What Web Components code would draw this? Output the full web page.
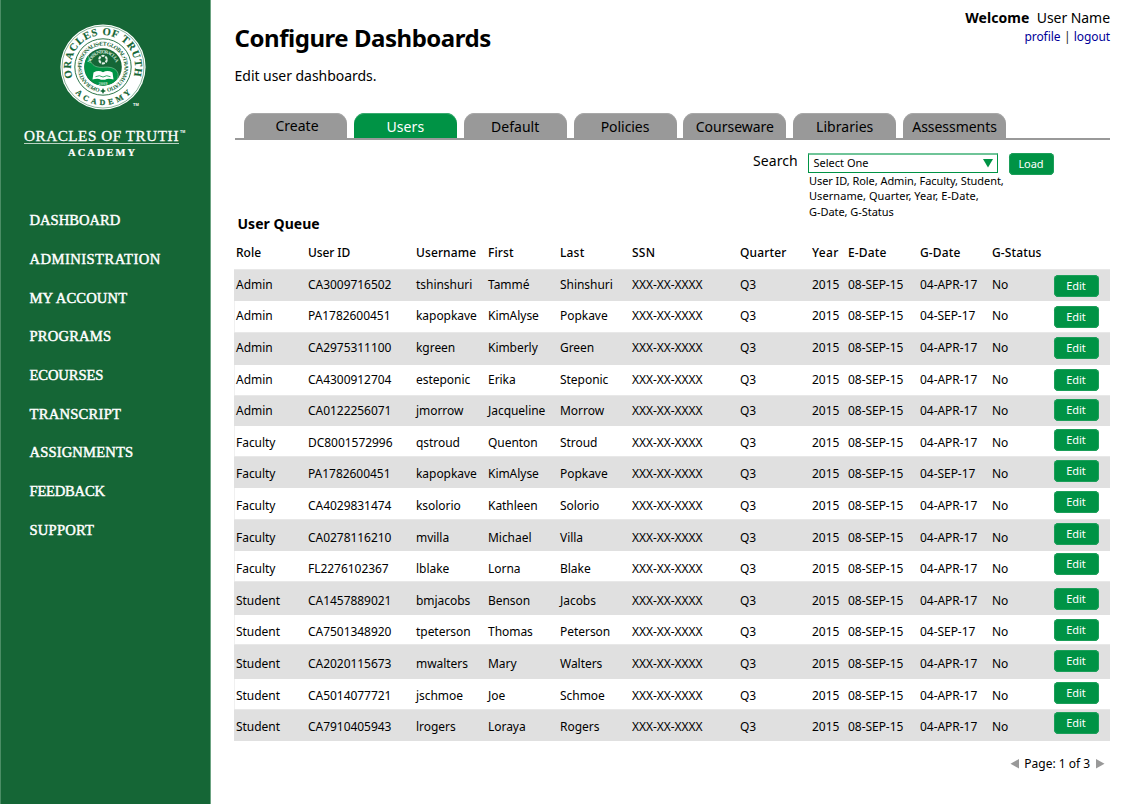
<!DOCTYPE html>
<html lang="en">
<head>
<meta charset="utf-8">
<title>Configure Dashboards</title>
<style>
html,body{margin:0;background:#fff}
body{font-family:"Noto Sans","Open Sans",sans-serif;color:#000;width:1135px;height:804px;overflow:hidden}
</style>
</head>
<body>
<dash-app></dash-app>
<script>
const define = (name, html, setup) => customElements.define(name, class extends HTMLElement {
  connectedCallback() {
    if (this.shadowRoot) return;
    const root = this.attachShadow({mode: 'open'});
    root.innerHTML = typeof html === 'function' ? html(this) : html;
    if (setup) setup(this, root);
  }
});

/* A single line of text whose tracking is set so that it fills the width in its "w" attribute. */
define('fit-text', `<style>:host{display:block;white-space:pre;width:max-content}span{display:inline-block}</style><span><slot></slot></span>`, (el, root) => {
  const w = +el.getAttribute('w'), span = root.querySelector('span');
  if (!w) return;
  const natural = span.getBoundingClientRect().width;
  span.style.letterSpacing = ((w - .8 - natural) / el.textContent.length) + 'px';
});

define('academy-seal', `<style>:host{display:block;width:90px;height:88px}svg{display:block}</style>
<svg width="90" height="88" viewBox="-45 -44 90 88" font-family="Liberation Serif,serif" fill="#156636">
<defs>
<path id="o" d="M-30.2 10.6A32 32 0 1 1 30.2 10.6"/>
<path id="b" d="M-32.2 20.2A38 38 0 0 0 32.2 20.2"/>
<path id="i" d="M-3 21.3A21.5 21.5 0 1 1 3 21.3"/>
<path id="n" d="M-12.6 -4A13.2 13.2 0 0 1 12.9 3"/>
</defs>
<circle r="42.6" fill="#fff"/>
<circle r="41" fill="none" stroke="#156636" stroke-width=".5"/>
<circle r="28.2" fill="none" stroke="#156636" stroke-width=".9"/>
<text font-size="10.6" font-weight="700" stroke="#156636" stroke-width=".15"><textPath href="#o" textLength="120">ORACLES OF TRUTH</textPath></text>
<text font-size="8" font-weight="700" stroke="#156636" stroke-width=".2"><textPath href="#b" startOffset="7.4" textLength="62">ACADEMY</textPath></text>
<text font-size="5.6" font-weight="700"><textPath href="#i" textLength="128">OPERANTES•PERSONALIS•ET GLOBAL•TRANSMUTATIO</textPath></text>
<path d="M0 21L1 23L3 24L1 25L0 27L-1 25L-3 24L-1 23Z"/>
<circle r="18.8" fill="#156636"/>
<path d="M-15 -11.3A18.8 18.8 0 0 0 14 12.5C17 7 14 2 8 .5C3 -.8 -2 1.5 -7 -.5C-12 -2.5 -13 -7 -15 -11.3Z" fill="#009345"/>
<path d="M-15 -11.3C-13 -7 -12 -2.5 -7 -.5C-2 1.5 3 -.8 8 .5C14 2 17 7 14 12.5" fill="none" stroke="#8cc9a2" stroke-width=".6"/>
<text font-size="4.9" font-weight="700" fill="#d5eadb"><textPath href="#n" textLength="34">NOS SUNT ORACULA</textPath></text>
<circle cy="-7.4" r="3.8" fill="none" stroke="#e2f1e7" stroke-width="2" stroke-dasharray="3 .98"/>
<path d="M-9.5 5.4Q-4.5 2.6 0 5.2Q4.5 2.6 9.5 5.4L10.5 12.6Q5 11 2 12.8H-2Q-5 11 -10.5 12.6Z" fill="#fff"/>
<path d="M-7.5 9.7Q-3.5 7.6 0 10Q3.5 7.6 7.5 9.7" stroke="#009345" stroke-width=".8" fill="none"/>
<text x="0" y="17.6" font-size="4.4" font-weight="700" text-anchor="middle" fill="#c4e2cd">2009</text>
<text x="30" y="39" font-family="Liberation Sans,sans-serif" font-size="4" font-weight="700" fill="#fff">TM</text>
</svg>`);

define('academy-brand', `<style>
:host{display:block;height:164px;color:#fff;padding:23px 0 0 24px;box-sizing:border-box;font-family:"Liberation Serif",serif}
academy-seal{margin-left:33.7px}
.name{display:flex;margin-top:16px;height:17px;line-height:17px;font-size:15.2px;-webkit-text-stroke:.3px #fff}
.name small{font:700 3.6px/5px "Liberation Sans",sans-serif;margin:3px 0 0 1px;-webkit-text-stroke:0}
.rule{width:155px;height:1px;background:#b9d2c3;margin-top:-1px}
.sub{margin:3px 0 0 44px;font-size:10.5px;line-height:12px;font-weight:700;-webkit-text-stroke:.2px #fff}
</style><academy-seal></academy-seal>
<div class="name"><fit-text w="155.8">ORACLES OF TRUTH</fit-text><small>TM</small></div><div class="rule"></div><fit-text class="sub" w="70">ACADEMY</fit-text>`);

define('nav-item', el => `<style>:host{display:block;height:17px;font:14.6px/17px "Liberation Serif",serif;color:#fff;-webkit-text-stroke:.45px #fff}</style><fit-text w="${el.getAttribute('w')}">${el.getAttribute('label')}</fit-text>`);

define('side-bar', `<style>
:host{display:block;box-sizing:border-box;width:211px;height:804px;background:#156636;border-left:1px solid #4b8d65;border-right:1px solid #6ba381}
academy-brand{margin-left:-1px}
nav{display:grid;grid-auto-rows:38.72px;padding:48.12px 0 0 28.5px}
</style><academy-brand></academy-brand>
<nav>${[['DASHBOARD',91.5],['ADMINISTRATION',132],['MY ACCOUNT',98.5],['PROGRAMS',82.5],['ECOURSES',74.5],['TRANSCRIPT',92.5],['ASSIGNMENTS',104.5],['FEEDBACK',76],['SUPPORT',65.5]].map(n => `<nav-item label="${n[0]}" w="${n[1]}"></nav-item>`).join('')}</nav>`);

define('page-header', `<style>
:host{display:flex;justify-content:space-between;height:113px;padding-left:.6px}
h1{margin:21px 0 12px;font-size:24px;line-height:33px}
p{margin:0;font-size:14px;line-height:19px}
.user{padding-top:8px;display:flex;flex-direction:column;align-items:flex-end}
.who{display:flex;gap:7.5px;font-size:14px;line-height:19px}
.links{display:flex;gap:3.3px;font-size:12px;line-height:17px;margin-top:1px;color:#222}
a{color:#000099}
</style>
<div><h1><fit-text w="257">Configure Dashboards</fit-text></h1><p><fit-text w="142.6">Edit user dashboards.</fit-text></p></div>
<div class="user"><div class="who"><b><fit-text w="64.8">Welcome</fit-text></b><fit-text w="74">User Name</fit-text></div>
<div class="links"><a><fit-text w="37">profile</fit-text></a><span>|</span><a><fit-text w="37">logout</fit-text></a></div></div>`);

define('tab-item', `<style>
:host{display:flex;justify-content:center;box-sizing:border-box;width:103px;height:25px;padding-top:4px;font-size:14px;line-height:19px;background:#999;border-radius:11px 11px 0 0;box-shadow:inset 0 1px #a9a9a9}
:host([up]){padding:3px 0 0 3px}
:host([active]){background:#009345;color:#fff;box-shadow:inset 0 1px #3aab70}
</style><slot></slot>`);

define('tab-strip', `<style>
:host{display:flex;gap:6.85px;height:25px;padding-left:9px;margin-left:1px;border-bottom:2px solid #999}
</style>${[['Create',44],['Users',38.6],['Default',49],['Policies',49.5],['Courseware',79],['Libraries',58],['Assessments',85.5]].map((t, i) => `<tab-item ${i === 0 ? 'up' : i === 1 ? 'active' : ''}><fit-text w="${t[1]}">${t[0]}</fit-text></tab-item>`).join('')}`);

define('action-button', el => `<style>:host{display:flex;justify-content:center;box-sizing:border-box;width:45px;height:22px;padding:3px 1px 0 0;border-radius:4.5px;background:#009345;box-shadow:inset 0 0 0 1px #1c9f5a;color:#fff;font-size:11px;line-height:15px}fit-text{white-space:nowrap}</style><fit-text w="${el.getAttribute('w')}">${el.getAttribute('label')}</fit-text>`);

define('select-box', `<style>
:host{display:flex;justify-content:space-between;box-sizing:border-box;width:190px;height:20px;border:1px solid #009345;border-top:2px solid #6fc498;padding:0 4.5px 0 4.5px;font-size:11px;line-height:15px}
svg{margin-top:4px}
</style><slot></slot><svg width="10" height="9"><path d="M0 0H10L5 8.5Z" fill="#009345"/></svg>`);

define('search-bar', `<style>
:host{display:flex;height:74px;padding-left:519px;font-size:11px;line-height:15px}
.label{margin-top:11px;width:55px;font-size:14px;line-height:19px}
.field{width:201px;padding-top:13px}
.help{padding-left:1px}
.help :last-child{margin-top:1px}
action-button{margin-top:13px}
</style>
<div class="label"><fit-text w="45.5">Search</fit-text></div>
<div class="field"><select-box><fit-text w="55.8">Select One</fit-text></select-box>
<div class="help"><fit-text w="195.5">User ID, Role, Admin, Faculty, Student,</fit-text><fit-text w="170.5">Username, Quarter, Year, E-Date,</fit-text><fit-text w="85.5">G-Date, G-Status</fit-text></div></div>
<action-button label="Load" w="26"></action-button>`);

const COLS = '72px 108px 72px 72px 72px 108px 72px 36px 72px 72px 62px 45px';

define('user-row', el => {
  const d = JSON.parse(el.getAttribute('data'));
  return `<style>
:host{display:grid;grid-template-columns:${COLS};box-sizing:border-box;height:${d.h}px;padding-left:2px;font-size:12px;line-height:17px;letter-spacing:-.04px;white-space:nowrap;box-shadow:inset 1px 0 #f0f0f0}
:host([odd]){background:#e0e0e0;box-shadow:inset 0 1px #e8e8e8}
span{margin-top:${d.t}px}
action-button{margin-top:${d.b}px}
</style>${d.cells.map(c => `<span>${c}</span>`).join('')}<action-button label="Edit" w="20"></action-button>`;
});

define('user-table', () => {
  const people = `Admin|CA3009716502|tshinshuri|Tammé|Shinshuri|APR
Admin|PA1782600451|kapopkave|KimAlyse|Popkave|SEP
Admin|CA2975311100|kgreen|Kimberly|Green|APR
Admin|CA4300912704|esteponic|Erika|Steponic|APR
Admin|CA0122256071|jmorrow|Jacqueline|Morrow|APR
Faculty|DC8001572996|qstroud|Quenton|Stroud|APR
Faculty|PA1782600451|kapopkave|KimAlyse|Popkave|SEP
Faculty|CA4029831474|ksolorio|Kathleen|Solorio|APR
Faculty|CA0278116210|mvilla|Michael|Villa|APR
Faculty|FL2276102367|lblake|Lorna|Blake|APR
Student|CA1457889021|bmjacobs|Benson|Jacobs|APR
Student|CA7501348920|tpeterson|Thomas|Peterson|SEP
Student|CA2020115673|mwalters|Mary|Walters|APR
Student|CA5014077721|jschmoe|Joe|Schmoe|APR
Student|CA7910405943|lrogers|Loraya|Rogers|APR`.split('\n').map(l => l.split('|'));
  /* row height, text inset, button inset */
  const m = [[32,7,6],[31,6,5],[33,7,5],[30,6,4],[31,7,4],[30,8,3],[32,9,4],[31,9,3],[32,10,4],[30,9,2],[34,11,7],[29,8,4],[35,11,6],[30,8,3],[32,9,3]];
  return `<style>
:host{display:block}
h2{margin:0 0 11px 3.5px;font-size:14px;line-height:19px}
.head{display:grid;grid-template-columns:${COLS};padding-left:2px;font-size:12px;line-height:17px;font-weight:500;margin-bottom:8px;white-space:nowrap}
</style><h2><fit-text w="83">User Queue</fit-text></h2>
<div class="head">${[['Role',26],['User ID',43],['Username',61],['First',26.4],['Last',25.2],['SSN',24],['Quarter',47.2],['Year',27.5],['E-Date',39.3],['G-Date',41.3],['G-Status',50.3]].map(h => `<fit-text w="${h[1]}">${h[0]}</fit-text>`).join('')}</div>
${people.map((p, i) => {
    const data = {h: m[i][0], t: m[i][1], b: m[i][2], cells: [...p.slice(0, 5), 'XXX-XX-XXXX', 'Q3', '2015', '08-SEP-15', `04-${p[5]}-17`, 'No']};
    return `<user-row ${i % 2 ? '' : 'odd'} data='${JSON.stringify(data)}'></user-row>`;
  }).join('')}`;
});

define('page-nav', `<style>
:host{display:flex;justify-content:flex-end;gap:5.5px;margin-top:14px;padding-right:5.5px;font-size:12px;line-height:17px}
svg{margin-top:4px}
</style><svg width="9" height="10"><path d="M9 0V9.5L.5 4.7Z" fill="#999"/></svg><fit-text w="66.5">Page: 1 of 3</fit-text><svg width="9" height="10"><path d="M0 0V9.5L8.5 4.7Z" fill="#999"/></svg>`);

define('dash-app', `<style>
:host{display:grid;grid-template-columns:211px 1fr;width:1135px;height:804px}
main{padding:0 25px 0 23px}
</style><side-bar></side-bar><main><page-header></page-header><tab-strip></tab-strip><search-bar></search-bar><user-table></user-table><page-nav></page-nav></main>`);
</script>
</body>
</html>
